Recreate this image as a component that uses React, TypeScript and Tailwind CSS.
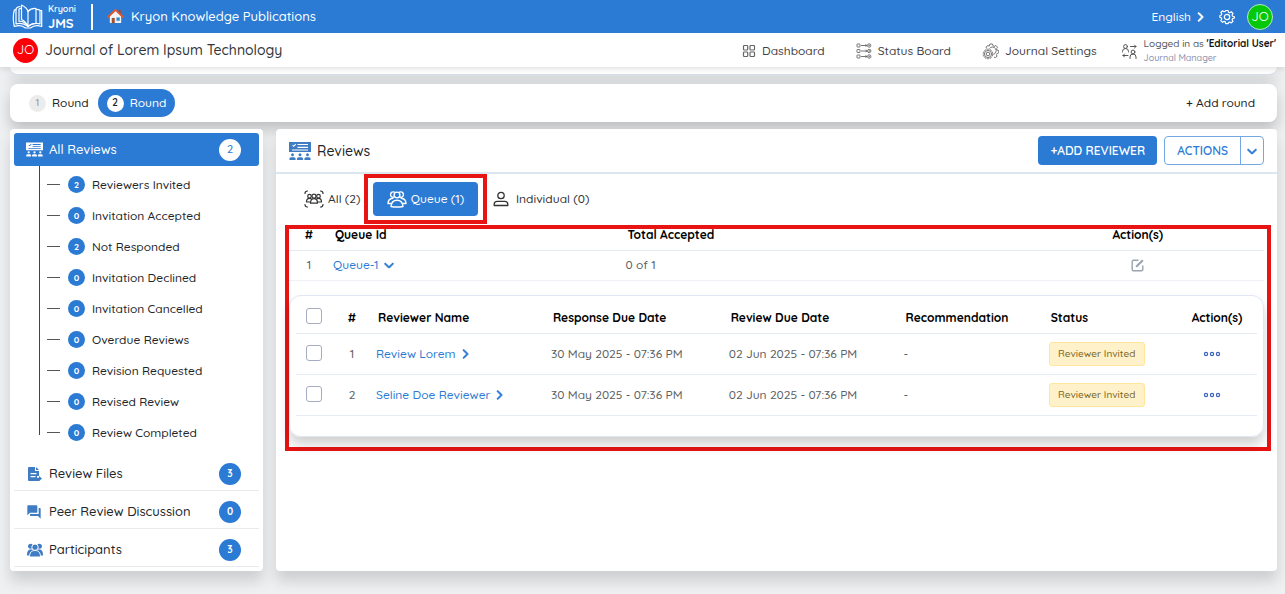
import type { ReactNode } from "react";
import { FaChevronDown, FaChevronRight } from "react-icons/fa6";
import { MdForum } from "react-icons/md";

const statuses = [
  { label: "Reviewers Invited", count: 2 },
  { label: "Invitation Accepted", count: 0 },
  { label: "Not Responded", count: 2 },
  { label: "Invitation Declined", count: 0 },
  { label: "Invitation Cancelled", count: 0 },
  { label: "Overdue Reviews", count: 0 },
  { label: "Revision Requested", count: 0 },
  { label: "Revised Review", count: 0 },
  { label: "Review Completed", count: 0 },
];

const reviewers = [
  { id: 1, name: "Review Lorem" },
  { id: 2, name: "Seline Doe Reviewer" },
];

function BookLogo() {
  return (
    <svg viewBox="0 0 32 26" className="h-[26px] w-8" fill="none" stroke="currentColor" strokeWidth="1.200" strokeLinejoin="round" strokeLinecap="round" aria-hidden="true">
      <path d="M4 5.500 2.300 6C1 11 1 17 2.300 22.500c4-1.400 8.500-1 11.200 1.500h5c2.700-2.500 7.200-2.900 11.200-1.500V6.500H28" />
      <path d="M8 2.500C5.500 3 4 4 4 5.500V20c4-1.300 8-.7 12 2.500" />
      <path d="M9.500 1c3.500 1.600 5.800 4 6.500 6.500v15c-1.200-3-3.500-5.500-6.500-7z" />
      <path d="M9.500 4.500C8 4.300 7 4.800 7 5.500v11.800c3.200-.3 6.500 1.700 9 5.200" />
      <path d="M16 7.500c2-2.300 4.500-3.300 8-3v14.800c-3.200.1-6 1-8 3.200" />
      <path d="M24 5.500c1.500-.2 3 .1 4 .7V20c-3.500-1.100-8-.8-12 2.500" />
    </svg>
  );
}

function HouseIcon() {
  return (
    <svg viewBox="0 0 18 18" className="size-[17px]" aria-hidden="true">
      <path d="M12.500 2h2v5h-2z" fill="#b9431f" />
      <path d="M3 8.500 9 3l6 5.500V16H3z" fill="#f3f4f6" />
      <path d="M5 10.500h3.200V16H5z" fill="#a5502c" />
      <path d="M10 10h3.500v3.500H10z" fill="#2f8ad6" />
      <path d="M1 9.500 9 2l8 7.500" fill="none" stroke="#e2562c" strokeWidth="2" strokeLinecap="round" strokeLinejoin="round" />
    </svg>
  );
}

function GearIcon() {
  return (
    <svg viewBox="0 0 24 24" className="size-4" fill="none" stroke="currentColor" strokeWidth="1.900" strokeLinejoin="round" aria-hidden="true">
      <path d="M10 2h4l.6 2.800 1.900.8 2.400-1.600 2.800 2.800-1.500 2.400.8 1.900L24 12v2l-3 1-.8 1.700 1.500 2.500-2.700 2.500-2.500-1.400-1.900.8L14 23h-4l-.6-2.900-1.900-.8-2.500 1.500L2.200 18l1.600-2.500-.8-1.900L.8 13v-3l2.300-.8.8-1.900L2.300 5 5 2.400 7.500 4l1.900-.8z" transform="translate(.6 .4) scale(.94)" />
      <circle cx="12" cy="12" r="4" />
    </svg>
  );
}

function DashboardIcon() {
  return (
    <svg viewBox="0 0 14 14" className="size-3.5" fill="none" stroke="currentColor" strokeWidth="1.200" aria-hidden="true">
      <rect x="1.500" y="1.500" width="4.200" height="4.500" rx=".8" />
      <rect x="8" y="1.500" width="4.500" height="4.500" rx=".8" />
      <rect x="1.500" y="8" width="4.200" height="4.500" rx=".8" />
      <rect x="8" y="8" width="4.500" height="4.500" rx=".8" />
    </svg>
  );
}

function StatusIcon() {
  return (
    <svg viewBox="0 0 16 16" className="size-4" fill="none" stroke="currentColor" strokeWidth=".9" aria-hidden="true">
      {[2.5, 8, 13.5].map((y) => (
        <g key={y}>
          <rect x="1" y={y - 1.5} width="3" height="3" rx=".4" />
          <path d={`M5 ${y}h6M9.500 ${y - 1}l1.500 1-1.500 1`} />
          <circle cx="13.200" cy={y} r="1.700" />
          <circle cx="13.200" cy={y} r=".4" />
        </g>
      ))}
    </svg>
  );
}

function JournalSettingsIcon() {
  return (
    <svg viewBox="0 0 17 17" className="size-[17px]" fill="none" stroke="currentColor" strokeWidth=".9" aria-hidden="true">
      <circle cx="6" cy="11" r="4.800" strokeDasharray="2.300 .7" />
      <circle cx="6" cy="11" r="3.600" />
      <circle cx="6" cy="11" r="1.800" />
      <path d="M4.500 5.500 4 4l2-1.500 1.200.6L8 1h2.500l.5 1.800 1.500.5 1.500-.8 1.500 1.800-.9 1.400.5 1.500 1.700.5v2.100l-1.700.7-.6 1.300.5 1.400-1.700 1.400-1.300-.4" />
      <path d="M7.500 5.500a3.700 3.700 0 1 1 4 5.800" />
    </svg>
  );
}

function SwitchUserIcon() {
  return (
    <svg viewBox="0 0 17 17" className="size-[17px]" fill="none" stroke="currentColor" strokeLinecap="round" strokeLinejoin="round" aria-hidden="true">
      <circle cx="4.500" cy="3.500" r="1.900" />
      <path d="M1.500 9V8.500a3 3 0 0 1 6 0V9M9.500 3.500H15M13.500 2 15 3.500 13.500 5" />
      <circle cx="12" cy="9" r="1.900" />
      <path d="M9 15.500V14a3 3 0 0 1 6 0v1.500M7 12.500H2M3.500 11 2 12.500 3.500 14" />
    </svg>
  );
}

function ReviewsIcon({ className }: { className: string }) {
  return (
    <svg viewBox="0 0 22 18" className={className} fill="currentColor" aria-hidden="true">
      <path fillRule="evenodd" d="M0 0h22v10H0zM3.200 3.400l1.500 1.500 2.500-2.500-.7-.7-1.800 1.800-.8-.8zM8.500 2v1.100H19V2zm0 2.800v1.100H19V4.800zM3 7.500v1h16v-1z" />
      {[3.5, 11, 18.5].map((x) => (
        <g key={x}>
          <circle cx={x} cy="12.700" r="1.500" />
          <path d={`M${x - 3.1} 18v-1.200q0-1.600 1.600-1.600h3q1.600 0 1.600 1.600V18z`} />
        </g>
      ))}
    </svg>
  );
}

function ReviewFilesIcon() {
  return (
    <svg viewBox="0 0 16 16" className="size-4" fill="currentColor" aria-hidden="true">
      <path fillRule="evenodd" d="M3 1h6v4h4v5h-2v2.500h2V15H3a1 1 0 0 1-1-1V2a1 1 0 0 1 1-1zm1.500 6v1.200h6V7zm0 3v1.200h5V10z" />
      <path d="m10 1 3 3h-3z" />
      <path d="M10 11.800h3V10l3 2.600-3 2.600v-1.700h-3z" />
    </svg>
  );
}

function ParticipantsIcon() {
  return (
    <svg viewBox="0 0 18 14" className="h-3.5 w-[18px]" fill="currentColor" aria-hidden="true">
      <circle cx="4.600" cy="3.200" r="2.500" />
      <circle cx="13.400" cy="3.200" r="2.500" />
      <path d="M1 12.500c0-3.500.8-5.900 3.700-5.900h8.600c2.900 0 3.700 2.400 3.700 5.900z" />
      <path d="M3.500 14c0-4.300 1.800-6.500 5.500-6.500s5.500 2.200 5.500 6.500z" stroke="#fff" />
      <circle cx="9" cy="4.200" r="3.200" stroke="#fff" />
    </svg>
  );
}

function AllTabIcon() {
  return (
    <svg viewBox="0 0 20 18" className="h-[18px] w-5" fill="none" stroke="currentColor" strokeWidth="1.200" strokeLinecap="round" aria-hidden="true">
      <path d="M3.500 1Q1 1 1 3.500M16.500 1Q19 1 19 3.500M3.500 17Q1 17 1 14.500M16.500 17q2.500 0 2.500-2.500" />
      <circle cx="5.500" cy="6.200" r="1.800" />
      <circle cx="10" cy="6.200" r="2" />
      <circle cx="14.500" cy="6.200" r="1.800" />
      <path d="M2.500 12c0-2.500 1-3.700 3-3.700 1 0 1.500.3 2 .8M17.500 12c0-2.500-1-3.700-3-3.700-1 0-1.500.3-2 .8M6.500 13.200c0-3 1.300-4.500 3.500-4.500s3.500 1.500 3.500 4.500zM2.500 12h4M13.500 12h4" />
    </svg>
  );
}

function QueueTabIcon() {
  return (
    <svg viewBox="0 0 20 18" className="h-[18px] w-5" fill="none" stroke="currentColor" strokeWidth="1.400" strokeLinecap="round" strokeLinejoin="round" aria-hidden="true">
      <circle cx="10" cy="5" r="2.900" />
      <path d="M7.500 2.200a2.700 2.700 0 1 0-.5 5M12.500 2.200a2.700 2.700 0 1 1 .5 5" />
      <path d="M4 16.500c.3-4.300 2.500-6.300 6-6.300s5.700 2 6 6.300c-4 .7-8 .7-12 0z" />
      <path d="M3.800 13.500H1c.1-3.300 1.500-5 4.800-5.300M16.200 13.500H19c-.1-3.300-1.500-5-4.800-5.300" />
    </svg>
  );
}

function PersonIcon() {
  return (
    <svg viewBox="0 0 16 16" className="size-4" fill="none" stroke="currentColor" strokeWidth="1.300" strokeLinejoin="round" aria-hidden="true">
      <circle cx="8" cy="4.500" r="3.200" />
      <path d="M1.200 14.500v-1.200q0-3 3-3h7.600q3 0 3 3v1.200z" />
    </svg>
  );
}

function EditIcon() {
  return (
    <svg viewBox="0 0 13 13" className="size-[13px]" fill="none" stroke="currentColor" strokeWidth="1.400" strokeLinecap="round" strokeLinejoin="round" aria-hidden="true">
      <path d="M7 1.300H2.500q-1.300 0-1.300 1.300v7.900q0 1.300 1.300 1.300h8q1.300 0 1.300-1.300V7" />
      <path d="M5.700 7.300 11.300 1.700" strokeWidth="2" />
    </svg>
  );
}

function MoreIcon() {
  return (
    <svg viewBox="0 0 18 6" className="h-1.5 w-[18px]" fill="none" stroke="currentColor" strokeWidth="1.200" aria-hidden="true">
      <circle cx="3" cy="3" r="1.600" />
      <circle cx="9" cy="3" r="1.600" />
      <circle cx="15" cy="3" r="1.600" />
    </svg>
  );
}

const chevron = "size-2.5 stroke-current stroke-[50]";

function NavLink({ icon, children }: { icon: ReactNode; children: ReactNode }) {
  return (
    <a href="#" className="flex items-center gap-1.5 text-[#3f4246]">
      <span className="text-[#666]">{icon}</span>
      {children}
    </a>
  );
}

function SideLink({ icon, label, count }: { icon: ReactNode; label: string; count: number }) {
  return (
    <a href="#" className="flex h-[38px] items-center border-b border-[#e9eaec] pt-[5px] pr-[18px] pl-3">
      <span className="flex w-[23px] items-center text-[#3f7cc4]">{icon}</span>
      <span className="flex-1 text-[13px]">{label}</span>
      <span className="flex size-[22px] items-center justify-center rounded-full bg-[#2b7ad3] text-[10px] font-bold text-white">{count}</span>
    </a>
  );
}

function StatusItem({ label, count }: { label: string; count: number }) {
  return (
    <li>
      <a href="#" className="flex h-[31px] items-center pl-[7px]">
        <span className="h-px w-[13px] bg-[#555]" />
        <span className="ml-2 flex size-[17px] items-center justify-center rounded-full bg-[#2b7ad3] text-[9px] font-bold text-white">{count}</span>
        <span className="ml-[7px]">{label}</span>
      </a>
    </li>
  );
}

function Checkbox({ label }: { label: string }) {
  return (
    <input
      type="checkbox"
      aria-label={label}
      className="block size-4 appearance-none rounded-[3px] border border-[#a5abc2] bg-white checked:bg-[#2b7ad3]"
    />
  );
}

export default function App() {
  return (
    <div className="min-h-screen bg-[#eff0f2] font-['Quicksand','Inter',sans-serif] text-xs font-medium text-[#212529]">
      <header className="sticky top-0 z-10 shadow-[0_2px_6px_rgba(0,0,0,0.12)]">
        <div className="flex h-[33px] items-center bg-[#2b7ad3] px-3 text-white">
          <a href="#" className="flex items-center gap-1">
            <BookLogo />
            <span className="flex w-[35px] flex-col font-semibold">
              <span className="text-[9px] leading-3">Kryoni</span>
              <span className="text-[13px] leading-4 font-bold">JMS</span>
            </span>
          </a>
          <div className="ml-2 h-[26px] w-0.5 bg-white" />
          <a href="#" className="ml-3.5 flex items-center gap-[7px] text-[13px] font-medium">
            <HouseIcon />
            Kryon Knowledge Publications
          </a>
          <button type="button" className="ml-auto flex items-center gap-1">
            English <FaChevronRight className={chevron} />
          </button>
          <button type="button" aria-label="Settings" className="ml-3.5">
            <GearIcon />
          </button>
          <button type="button" className="ml-3 flex size-[26px] items-center justify-center rounded-full border border-[#b5e8c0] bg-[#06c80a] text-[13px] font-normal">
            JO
          </button>
        </div>
        <div className="flex h-[34px] items-center bg-white pr-[9px] pl-[13px]">
          <span className="flex size-[25px] items-center justify-center rounded-full bg-[#fb0007] text-[13px] font-normal text-white">JO</span>
          <h1 className="ml-[7px] text-sm text-[#33363a]">Journal of Lorem Ipsum Technology</h1>
          <nav className="ml-auto flex items-center gap-[31px] pt-0.5">
            <NavLink icon={<DashboardIcon />}>Dashboard</NavLink>
            <NavLink icon={<StatusIcon />}>Status Board</NavLink>
            <NavLink icon={<JournalSettingsIcon />}>Journal Settings</NavLink>
          </nav>
          <a href="#" className="ml-6 flex items-center gap-1.5 pt-0.5">
            <span className="text-[#555]"><SwitchUserIcon /></span>
            <span className="flex flex-col text-[#55585c]">
              <span className="text-[10px] leading-[14px]">
                Logged in as <b className="font-bold text-[#111]">'Editorial User'</b>
              </span>
              <span className="text-[9px] leading-[14px] text-[#8b90ae]">Journal Manager</span>
            </span>
          </a>
        </div>
      </header>

      <div className="pr-2 pl-2.5">
        <div className="h-2 rounded-b-xl border-b border-[#d5deeb] bg-white shadow-[0_8px_14px_rgba(0,0,0,0.2)]" />

        <section className="mt-[9px] flex h-[38px] items-center rounded-lg bg-white pr-[22px] pl-[19px] shadow-[0_8px_14px_rgba(0,0,0,0.2)]">
          <button type="button" className="flex items-center gap-1.5 text-[#222]">
            <span className="flex size-[17px] items-center justify-center rounded-full bg-[#ececec] text-[9px] text-[#8a8a8a]">1</span>
            Round
          </button>
          <button type="button" className="ml-[9px] flex h-7 items-center gap-1.5 rounded-full bg-[#2b7ad3] px-[9px] text-white">
            <span className="flex size-[17px] items-center justify-center rounded-full bg-white text-[10px] font-semibold text-[#222]">2</span>
            Round
          </button>
          <button type="button" className="ml-auto text-[#222]">+ Add round</button>
        </section>

        <div className="mt-[7px] flex gap-[13px]">
          <aside className="w-[253px] shrink-0 rounded bg-white p-1 shadow-[0_10px_14px_rgba(0,0,0,0.14)]">
            <a href="#" className="flex h-[33px] items-center rounded-[3px] bg-[#2b7ad3] pr-[18px] pl-3 text-white">
              <ReviewsIcon className="h-[15px] w-[17px]" />
              <span className="ml-1.5 flex-1 text-[13px]">All Reviews</span>
              <span className="flex size-[22px] items-center justify-center rounded-full bg-white text-[11px] text-[#2b7ad3]">2</span>
            </a>
            <div className="pb-[18px] pl-[25px]">
              <ul className="h-[269px] border-l border-[#444] pt-[3px]">
                {statuses.map((s) => (
                  <StatusItem key={s.label} {...s} />
                ))}
              </ul>
            </div>
            <SideLink icon={<ReviewFilesIcon />} label="Review Files" count={3} />
            <SideLink icon={<MdForum className="size-4" />} label="Peer Review Discussion" count={0} />
            <SideLink icon={<ParticipantsIcon />} label="Participants" count={3} />
          </aside>

          <main className="min-w-0 flex-1 rounded bg-white shadow-[0_10px_14px_rgba(0,0,0,0.14)]">
            <div className="flex h-[45px] items-center border-b-2 border-[#dce6f1] pr-[13px] pl-[13px]">
              <span className="text-[#3f7cc4]"><ReviewsIcon className="h-[18px] w-[22px]" /></span>
              <h2 className="ml-1.5 text-sm">Reviews</h2>
              <button type="button" className="ml-auto h-[29px] rounded bg-[#2b7ad3] px-3 font-semibold text-white">
                +ADD REVIEWER
              </button>
              <div className="ml-[7px] flex h-[29px] rounded border border-[#74a8e2] text-[#2b7ad3]">
                <button type="button" className="px-3 font-semibold">ACTIONS</button>
                <button type="button" aria-label="More actions" className="flex w-[23px] items-center justify-center border-l border-[#74a8e2]">
                  <FaChevronDown className={chevron} />
                </button>
              </div>
            </div>

            <div className="flex h-[50px] items-center pl-7 text-[#333]">
              <button type="button" className="flex w-[60px] items-center gap-1 whitespace-nowrap">
                <AllTabIcon /> All (2)
              </button>
              <div className="border-4 border-[#e81313] px-[5px] py-1">
                <button type="button" className="flex h-[34px] w-[105px] items-center justify-center gap-1 rounded bg-[#2b7ad3] text-white">
                  <QueueTabIcon /> Queue (1)
                </button>
              </div>
              <button type="button" className="ml-1.5 flex items-center gap-[7px]">
                <PersonIcon /> Individual (0)
              </button>
            </div>

            <section className="mt-px mr-1.5 ml-[9px] border-4 border-[#e81313] pr-[3px] pb-2.5">
              <table className="w-full table-fixed text-left">
                <thead>
                  <tr className="h-[21px] border-b border-[#e3eaf2] text-black">
                    <th className="w-10 pb-2 text-center leading-3 font-bold">#</th>
                    <th className="w-[30%] pb-2 pl-1.5 leading-3 font-bold">Queue Id</th>
                    <th className="w-[40%] pb-2 pl-1.5 leading-3 font-bold">Total Accepted</th>
                    <th className="pb-2 text-center leading-3 font-bold">Action(s)</th>
                  </tr>
                </thead>
                <tbody>
                  <tr className="h-[30px] border-b border-[#eef1f5] text-[#5c5f63]">
                    <td className="text-center">1</td>
                    <td className="pl-1">
                      <button type="button" className="flex items-center gap-1.5 text-[#2b7ad3]">
                        Queue-1 <FaChevronDown className={chevron} />
                      </button>
                    </td>
                    <td className="pl-1">0 of 1</td>
                    <td>
                      <button type="button" aria-label="Edit queue" className="mx-auto block text-[#9aa3ad]">
                        <EditIcon />
                      </button>
                    </td>
                  </tr>
                </tbody>
              </table>

              <div className="mt-3.5 rounded-xl border border-[#dfe7f2] px-1.5 pb-5 shadow-[0_8px_12px_rgba(0,0,0,0.18)]">
                <table className="w-full table-fixed text-left whitespace-nowrap">
                  <thead>
                    <tr className="h-[38px] border-b border-[#e3eaf2] text-black">
                      <th className="w-[42px] pt-1 pl-2.5"><Checkbox label="Select all reviewers" /></th>
                      <th className="w-[28px] pt-2 text-center font-bold">#</th>
                      <th className="w-[18.2%] pt-2 pl-3 font-bold">Reviewer Name</th>
                      <th className="w-[18.5%] pt-2 pl-3 font-bold">Response Due Date</th>
                      <th className="w-[18.2%] pt-2 pl-3 font-bold">Review Due Date</th>
                      <th className="w-[15.1%] pt-2 pl-3 font-bold">Recommendation</th>
                      <th className="pt-2 pl-3 font-bold">Status</th>
                      <th className="w-20 pt-2 text-center font-bold">Action(s)</th>
                    </tr>
                  </thead>
                  <tbody>
                    {reviewers.map((r) => (
                      <tr key={r.id} className="h-[41px] border-b border-[#e6ecf5] text-[#5c5f63]">
                        <td className="pb-0.5 pl-2.5"><Checkbox label={`Select ${r.name}`} /></td>
                        <td className="text-center">{r.id}</td>
                        <td className="pl-2.5">
                          <a href="#" className="flex items-center gap-1 text-[#2b7ad3]">
                            {r.name} <FaChevronRight className={chevron} />
                          </a>
                        </td>
                        <td className="pl-2.5">30 May 2025 - 07:36 PM</td>
                        <td className="pl-2.5">02 Jun 2025 - 07:36 PM</td>
                        <td className="pl-2.5">-</td>
                        <td className="pl-2.5">
                          <span className="inline-flex h-6 w-24 items-center justify-center rounded-[3px] border border-[#ffe69b] bg-[#fff1c9] text-[10px] text-[#77661f]">
                            Reviewer Invited
                          </span>
                        </td>
                        <td className="pr-2.5">
                          <button type="button" aria-label={`Actions for ${r.name}`} className="mx-auto block text-[#3c62bd]">
                            <MoreIcon />
                          </button>
                        </td>
                      </tr>
                    ))}
                  </tbody>
                </table>
              </div>
            </section>
          </main>
        </div>
      </div>
    </div>
  );
}
